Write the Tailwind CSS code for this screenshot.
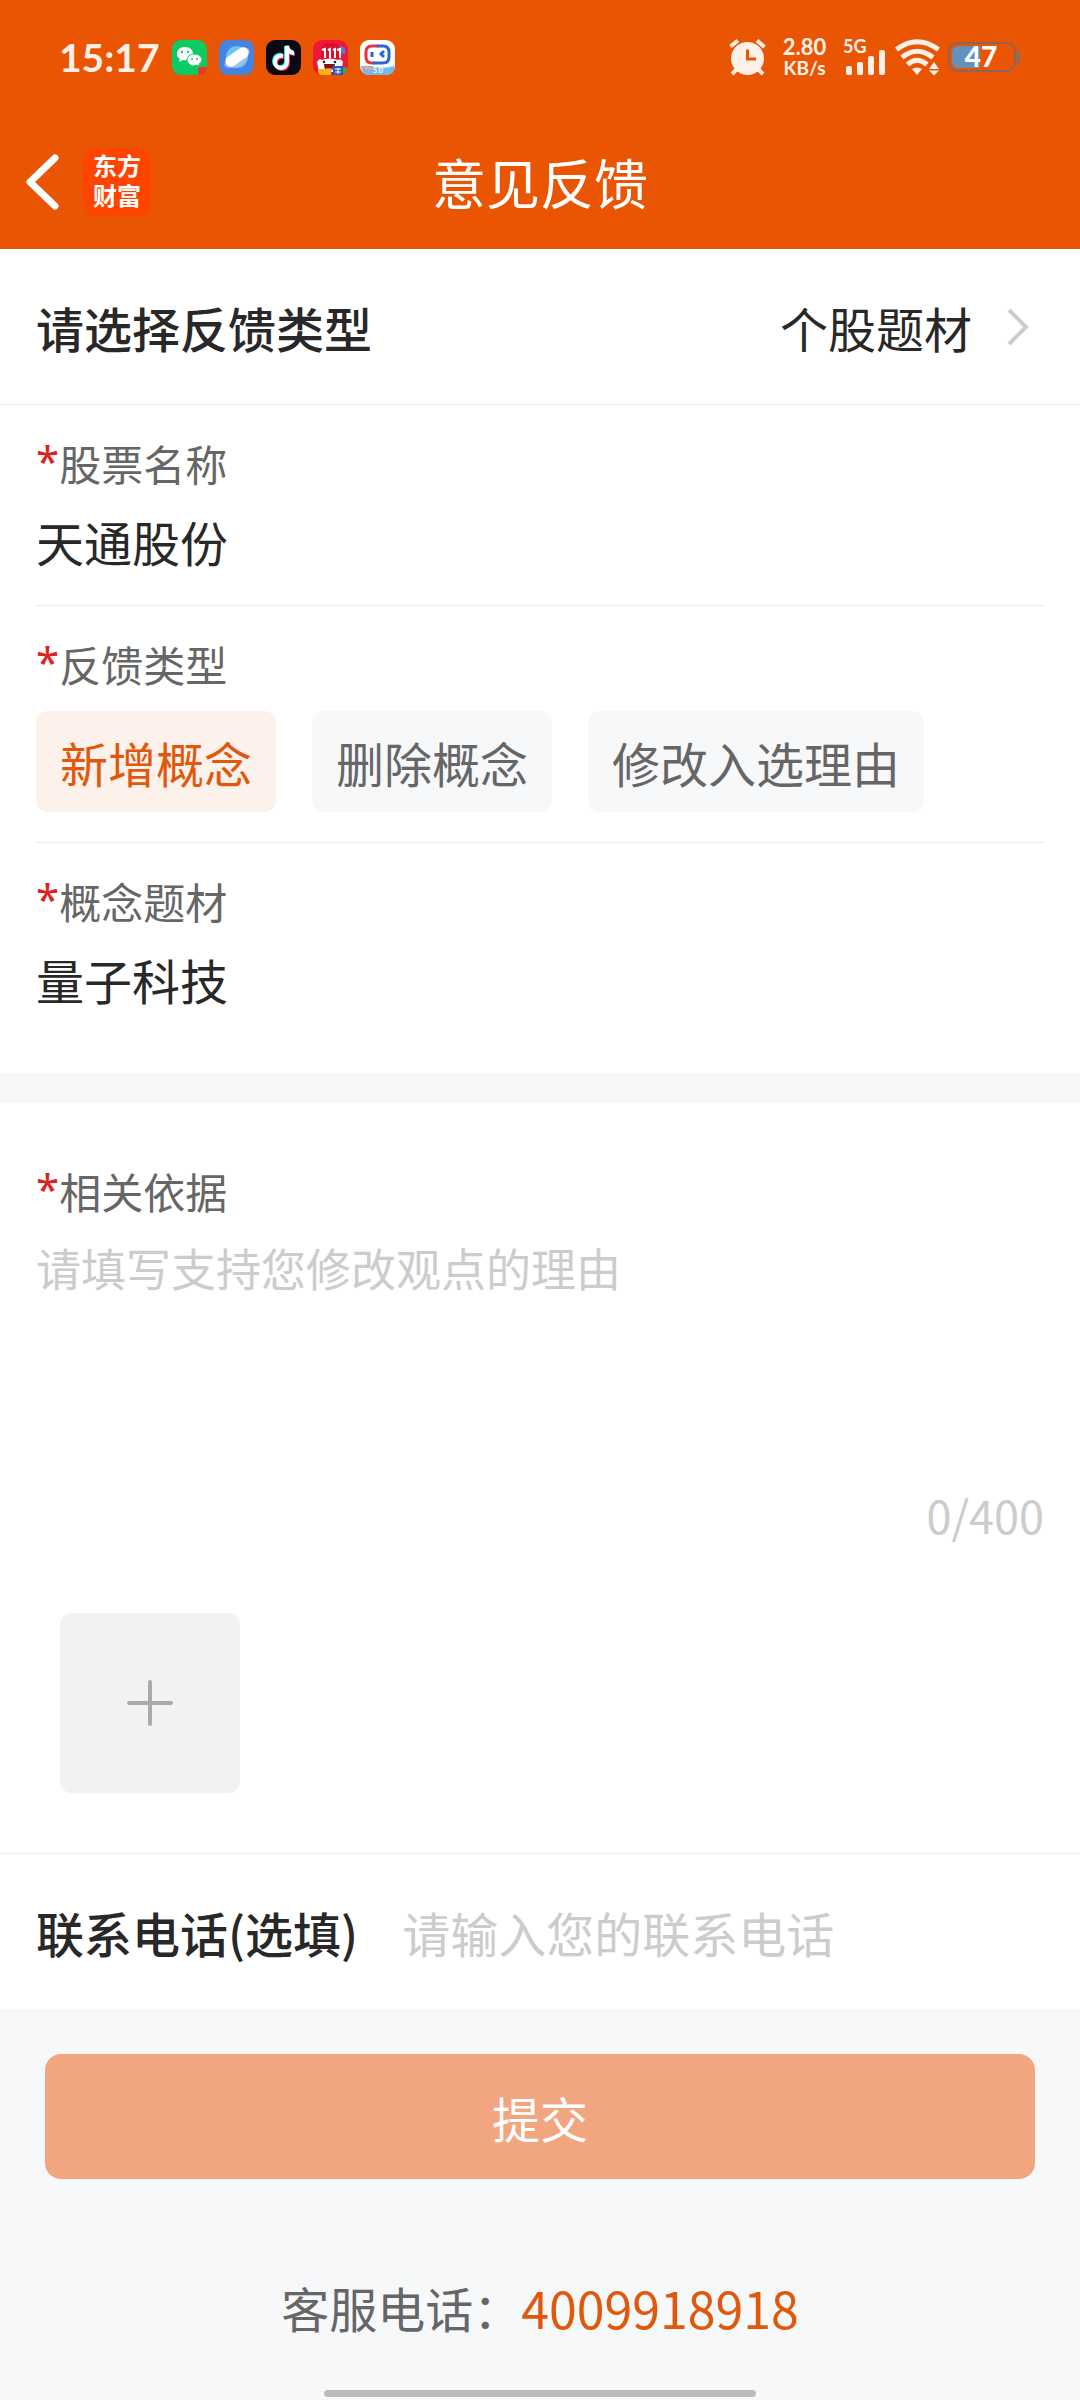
<!DOCTYPE html>
<html lang="zh-CN">

<head>
    <meta charset="UTF-8">
    <meta name="viewport" content="width=device-width, initial-scale=1.0">
    <title>意见反馈</title>
    <script src="https://cdn.jsdelivr.net/npm/@tailwindcss/browser@4"></script>
</head>

<body class="min-h-screen flex flex-col bg-[#f7f8fa] text-[#282828] text-[48px] leading-[72px] font-['Noto_Sans_CJK_SC',sans-serif]">

    <header class="bg-[#ea5504] text-white">
        <!-- status bar -->
        <div class="h-[114px] px-[59px] flex items-center justify-between text-[#fff1e8] font-['Lato',sans-serif]">
            <div class="flex items-center gap-3">
                <span class="w-[101px] text-[39px] leading-[48px] font-bold">15:17</span>

                <svg class="size-[35px]" viewBox="0 0 35 35">
                    <rect width="35" height="35" rx="9" fill="#0bcb62" />
                    <path d="M26 27h9v1q-1 7-8 7h-1z" fill="#e23b2e" />
                    <path d="M13 7c-5 0-8 3-8 7 0 2 1 4 3 5l-1 3 4-2q4 1 6-1 4-1 4-5c0-4-3-7-8-7z" fill="#fff" />
                    <path d="M22 14c-4 0-7 3-7 6s3 6 7 6l3-1 3 2-1-3q3-2 3-4c0-3-3-6-8-6z" fill="#fff" stroke="#0bcb62" stroke-width="1" />
                    <g fill="#0bcb62">
                        <circle cx="10" cy="12" r="1.2" />
                        <circle cx="16" cy="12" r="1.2" />
                        <circle cx="20" cy="19" r="1" />
                        <circle cx="25" cy="19" r="1" />
                    </g>
                </svg>

                <svg class="size-[35px]" viewBox="0 0 35 35">
                    <rect width="35" height="35" rx="9" fill="#4583e0" />
                    <circle cx="18" cy="17" r="11" fill="#6bc4f2" />
                    <ellipse cx="18" cy="18" rx="15" ry="6" transform="rotate(-35 18 18)" fill="#86abee" />
                    <path d="M9 27q10 3 17-5l3-6-14 8z" fill="#a3bff0" />
                    <rect x="5" y="11.500" width="26" height="11" rx="5.500" transform="rotate(-35 18 17)" fill="#fff" />
                </svg>

                <svg class="size-[35px]" viewBox="0 0 35 35">
                    <rect width="35" height="35" rx="9" fill="#0a0a14" />
                    <g fill="none" stroke-width="4">
                        <path d="M16 15c-5-1-8 2-8 6s3 6 6 6 6-2 6-6V6c1 4 3 6 7 6" stroke="#25e6e6" />
                        <path d="M18 17c-5-1-8 2-8 6s3 6 6 6 6-2 6-6V8c1 4 3 6 7 6" stroke="#f22c55" />
                        <path d="M17 16c-5-1-8 2-8 6s3 6 6 6 6-2 6-6V6c1 5 3 7 7 7" stroke="#fff" />
                    </g>
                </svg>

                <svg class="size-[35px]" viewBox="0 0 35 35">
                    <rect width="35" height="35" rx="9" fill="#ef1838" />
                    <path d="M25 5l7 3v6l-5-1z" fill="#4a83d8" />
                    <path d="M8 11q0-8 10-8t10 8v8H8z" fill="#d8102c" />
                    <path d="M9 10l3-1v9M15 10l2-1v9M20 10l2-1v9M24 10l3-1v9" fill="none" stroke="#fff" stroke-width="2" />
                    <path d="M4 22q2-4 5-2 8-3 16 0 3-2 5 2l-2 10H6z" fill="#fff" />
                    <circle cx="11" cy="22" r="1.300" fill="#222" />
                    <circle cx="22" cy="22" r="1.300" fill="#222" />
                    <path d="M11 24h11q-1 7-6 7t-5-7z" fill="#7c1717" />
                    <path d="M13 28h7q-1 3-4 3t-3-3z" fill="#f05a4d" />
                    <path d="M5 29h13v6H9q-3 0-4-3z" fill="#f7b414" />
                    <rect x="20" y="26" width="10" height="9" fill="#1e5ecb" />
                    <path d="M22 29h6M22 32h6M25 28v6" stroke="#fff" stroke-width="1" />
                    <path d="M30 28l4-1v3q-1 3-4 4z" fill="#37a84c" />
                </svg>

                <svg class="size-[35px]" viewBox="0 0 35 35">
                    <rect width="35" height="35" rx="9" fill="#fff" />
                    <path d="M1 26q8-1 14 1 10 2 20-1-1 9-9 9H9q-7 0-8-9z" fill="#74b9ee" />
                    <path d="M2 26q7 0 12 3l-8 1z" fill="#f5a58a" />
                    <path d="M35 25q-8 5-18 3 12 0 18-3z" fill="#7be0d0" />
                    <path d="M18 6h-6q-6 0-6 6v5q0 6 6 6h2" fill="none" stroke="#e0383e" stroke-width="3" />
                    <path d="M17 6h6q6 0 6 6v5q0 6-6 6H13" fill="none" stroke="#2f62d4" stroke-width="3" />
                    <path d="M12 12v5M24 11l-3 3 3 3" fill="none" stroke="#2f62d4" stroke-width="3" />
                    <text x="18" y="33" text-anchor="middle" font-size="7" font-weight="700" fill="#fff">5.0</text>
                </svg>
            </div>

            <div class="flex items-center">
                <svg class="size-[37px]" viewBox="0 0 37 37">
                    <path d="M1.500 7.500L9 1.500M28 1.500L35.500 8M3 35l6-6M34 35l-6-6" stroke="#fff1e8" stroke-width="4" />
                    <circle cx="18.500" cy="19.500" r="16.500" fill="#fff1e8" />
                    <path d="M18.500 10.500v9.500H27" fill="none" stroke="#ea5504" stroke-width="3" />
                </svg>

                <p class="w-[77px] text-center font-bold text-[22px] leading-[20px]">2.80<br><span class="text-[19px]">KB/s</span></p>

                <svg class="w-[44px] h-[37px] overflow-visible" viewBox="0 0 44 37" fill="#fff1e8">
                    <text x="0" y="14" font-size="18" font-weight="700">5G</text>
                    <rect x="3" y="27" width="6" height="9" rx="2" />
                    <rect x="14" y="23" width="6" height="13" rx="2" />
                    <rect x="25" y="17" width="6" height="19" rx="2" />
                    <rect x="36" y="11" width="6" height="25" rx="2" />
                </svg>

                <svg class="w-[45px] h-[37px] ml-2" viewBox="0 0 45 37">
                    <g fill="none" stroke="#fff1e8" stroke-width="5">
                        <path d="M1.500 10.500Q22 -5 43.500 10.500" />
                        <path d="M7 18.500Q22 6 38 18.500" />
                        <path d="M12.500 25.500Q22 17 32 25.500" />
                    </g>
                    <g fill="#fff1e8">
                        <path d="M17 30q5-3 10 0l-5 6z" />
                        <path d="M34 30l5-7 5 7zM34 31.500h10l-5 5z" />
                    </g>
                </svg>

                <svg class="w-[73px] h-[32px] ml-2 overflow-visible" viewBox="0 0 73 32">
                    <rect x="1" y="2" width="66" height="28" rx="8" fill="none" stroke="#8b6657" stroke-width="2" />
                    <path d="M11 5h21v22H11q-7 0-7-7v-8q0-7 7-7z" fill="#6490bd" />
                    <path d="M69 10q3 0 3 3v6q0 3-3 3z" fill="#7b6f78" />
                    <text x="33" y="26" text-anchor="middle" font-size="28" font-weight="900" fill="#fff">47</text>
                </svg>
            </div>
        </div>

        <!-- title bar -->
        <div class="h-[135px] grid grid-cols-[1fr_auto_1fr] items-center">
            <div class="flex items-center gap-6 pl-[26px]">
                <button type="button" aria-label="返回">
                    <svg class="w-[33px] h-[56px]" viewBox="0 0 33 56" fill="none" stroke="#fff" stroke-width="7" stroke-linecap="round" stroke-linejoin="round">
                        <path d="M29 4L4 28l25 24" />
                    </svg>
                </button>
                <p class="size-[68px] pt-0.5 rounded-[14px] bg-[#ff4400] text-center text-[24px] leading-[30px] font-bold">东方<br>财富</p>
            </div>
            <h1 class="text-[54px]">意见反馈</h1>
        </div>
    </header>

    <form class="flex flex-col">
        <div class="bg-white">
            <button type="button" class="w-full h-[156px] px-9 flex items-center border-b border-[#ededed]">
                <span class="font-medium">请选择反馈类型</span>
                <span class="ml-auto">个股题材</span>
                <svg class="w-[24px] h-[38px] ml-[34px] mr-[14px]" viewBox="0 0 24 38" fill="none" stroke="#ccc" stroke-width="4">
                    <path d="M3 2l17 17L3 36" />
                </svg>
            </button>

            <div class="mx-9 pt-7 pb-7 border-b border-[#ededed]">
                <label for="stock" class="flex text-[42px] leading-[60px] text-[#666]"><span class="leading-[56px] font-['Noto_Sans'] text-[#e02020]">*</span>股票名称</label>
                <input id="stock" type="text" value="天通股份" class="block w-full h-[72px] mt-3 outline-none">
            </div>

            <div class="mx-9 pt-7 pb-[30px] border-b border-[#ededed]">
                <p id="type" class="flex text-[42px] leading-[60px] text-[#666]"><span class="leading-[56px] font-['Noto_Sans'] text-[#e02020]">*</span>反馈类型</p>
                <div role="group" aria-labelledby="type" class="mt-[17px] flex gap-9 text-[#666]">
                    <button type="button" aria-pressed="true" class="h-[101px] px-6 rounded-xl bg-[#fdf1eb] text-[#e0580c]">新增概念</button>
                    <button type="button" aria-pressed="false" class="h-[101px] px-6 rounded-xl bg-[#f7f8fa]">删除概念</button>
                    <button type="button" aria-pressed="false" class="h-[101px] px-6 rounded-xl bg-[#f7f8fa]">修改入选理由</button>
                </div>
            </div>

            <div class="mx-9 pt-7 pb-[58px]">
                <label for="concept" class="flex text-[42px] leading-[60px] text-[#666]"><span class="leading-[56px] font-['Noto_Sans'] text-[#e02020]">*</span>概念题材</label>
                <input id="concept" type="text" value="量子科技" class="block w-full h-[72px] mt-3 outline-none">
            </div>
        </div>

        <div class="mt-[30px] bg-white">
            <div class="mx-9 pt-[58px] pb-[60px]">
                <label for="reason" class="flex text-[42px] leading-[60px] text-[#666]"><span class="leading-[56px] font-['Noto_Sans'] text-[#e02020]">*</span>相关依据</label>
                <textarea id="reason" maxlength="400" placeholder="请填写支持您修改观点的理由" class="block w-full h-[247px] mt-[17px] resize-none outline-none text-[45px] leading-[60px] placeholder:text-[#ccc]"></textarea>
                <p class="text-right text-[45px] leading-[60px] text-[#ccc]">0/400</p>
                <button type="button" aria-label="添加图片" class="size-[180px] mt-[68px] ml-6 rounded-xl bg-[#f2f2f4] flex items-center justify-center">
                    <svg class="size-[48px]" viewBox="0 0 48 48" stroke="#aaa" stroke-width="4" stroke-linecap="round">
                        <path d="M24 3v42M3 24h42" />
                    </svg>
                </button>
            </div>

            <div class="h-[156px] px-9 flex items-center gap-11 border-t border-[#ededed]">
                <label for="phone" class="font-medium">联系电话(选填)</label>
                <input id="phone" type="tel" placeholder="请输入您的联系电话" class="flex-1 h-[72px] outline-none placeholder:text-[#ccc]">
            </div>
        </div>

        <button type="submit" disabled class="h-[125px] mx-[45px] mt-[45px] rounded-2xl bg-[#f1a680] text-white">提交</button>
    </form>

    <p class="mt-[92px] flex justify-center text-[#666]">
        客服电话：<a href="tel:4009918918" class="text-[50px] text-[#e0580c]">4009918918</a>
    </p>

    <!-- home indicator -->
    <div class="w-2/5 h-[7px] mt-auto mb-[3px] mx-auto rounded-full bg-[#bbbcbe]"></div>

</body>

</html>
